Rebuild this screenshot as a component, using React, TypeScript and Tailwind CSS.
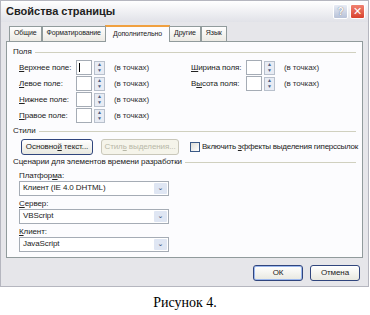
import React from 'react';

const font = "font-['Liberation_Sans','DejaVu_Sans',sans-serif]";

function Spin() {
    return (
        <div className="flex items-center gap-[2px]">
            <div className="h-[15px] w-[16px] border border-[#a5acb5] bg-white" />
            <div className="flex h-[14px] w-[11px] flex-col border border-[#b8c0cc] bg-[#e8ecf4]">
                <div className="flex flex-1 items-center justify-center text-[5px] leading-none text-[#4d6185]">▲</div>
                <div className="flex flex-1 items-center justify-center text-[5px] leading-none text-[#4d6185]">▼</div>
            </div>
        </div>
    );
}

function FieldRow({ label, u, first }: { label: string; u: string; first?: boolean }) {
    const i = label.indexOf(u);
    return (
        <div className="flex h-[16px] items-center">
            <span className="w-[57px]">
                {label.slice(0, i)}
                <span className="underline">{u}</span>
                {label.slice(i + 1)}
            </span>
            <div className="relative">
                <Spin />
                {first && <div className="absolute left-[3px] top-[3px] h-[9px] w-px bg-black" />}
            </div>
            <span className="ml-[9px] text-[#333]">(в точках)</span>
        </div>
    );
}

function Group({ title }: { title: string }) {
    return (
        <div className="flex h-[11px] items-center gap-[3px] pr-[6px]">
            <span>{title}</span>
            <div className="h-px flex-1 bg-[#d0d0bf]" />
        </div>
    );
}

function Select({ value }: { value: string }) {
    return (
        <div className="flex h-[15px] w-[150px] items-center justify-between border border-[#a5acb5] bg-white pl-[3px] pr-[1px]">
            <span>{value}</span>
            <div className="flex h-[11px] w-[13px] items-center justify-center rounded-[1px] bg-[#dfe6f3] text-[7px] font-bold text-[#4d6185]">
                ⌄
            </div>
        </div>
    );
}

export default function App() {
    const tabs = ['Общие', 'Форматирование', 'Дополнительно', 'Другие', 'Язык'];
    return (
        <div className={`h-[315px] w-[370px] whitespace-nowrap bg-white text-[8px] tracking-[-0.1px] text-[#222] ${font}`}>
            <div className="flex h-[287px] w-[369px] flex-col border border-[#b5b6bf] bg-[#e6e6ea] px-[5px] pb-[5px]">
                {/* title bar */}
                <div className="-mx-[5px] flex h-[21px] items-center justify-between bg-gradient-to-b from-[#ffffff] to-[#e1e2e8] pl-[5px] pr-[3px]">
                    <span className="text-[11px] font-bold tracking-normal text-[#222]">Свойства страницы</span>
                    <div className="flex gap-[2px]">
                        <div className="flex h-[15px] w-[15px] items-center justify-center rounded-[2px] border border-[#fff] bg-gradient-to-b from-[#e8ecf5] to-[#b8c2d8] text-[10px] font-bold text-[#fff] [text-shadow:0_0_1px_#445]">
                            ?
                        </div>
                        <div className="flex h-[15px] w-[15px] items-center justify-center rounded-[2px] border border-[#fff] bg-gradient-to-b from-[#f08070] to-[#d8402c] text-[11px] font-bold text-white">
                            ✕
                        </div>
                    </div>
                </div>
                {/* tabs */}
                <div className="mt-[3px] flex items-end pl-[3px] text-[7px] tracking-[-0.1px]">
                    {tabs.map((t) => {
                        const sel = t === 'Дополнительно';
                        return (
                            <div
                                key={t}
                                className={
                                    sel
                                        ? 'relative z-10 -mx-[1px] -mb-px flex h-[17px] items-center border border-b-0 border-[#919b9c] border-t-2 border-t-[#f0a040] bg-[#fcfcfe] px-[7px]'
                                        : 'flex h-[15px] items-center border border-b-0 border-[#919b9c] bg-gradient-to-b from-[#fefefe] to-[#eceae4] px-[4px]'
                                }
                            >
                                {t}
                            </div>
                        );
                    })}
                </div>
                {/* panel */}
                <div className="flex h-[221px] flex-col border border-[#919b9c] bg-[#fcfcfe] pl-[6px] pt-[5px]">
                    <Group title="Поля" />
                    <div className="ml-[6px] mt-[2px] flex">
                        <div className="flex w-[172px] flex-col">
                            <FieldRow label="Верхнее поле:" u="В" first />
                            <FieldRow label="Левое поле:" u="Л" />
                            <FieldRow label="Нижнее поле:" u="Н" />
                            <FieldRow label="Правое поле:" u="П" />
                        </div>
                        <div className="flex flex-col">
                            <div className="flex h-[16px] items-center">
                                <span className="w-[55px]">
                                    <span className="underline">Ш</span>ирина поля:
                                </span>
                                <Spin />
                                <span className="ml-[9px] text-[#333]">(в точках)</span>
                            </div>
                            <div className="flex h-[16px] items-center">
                                <span className="w-[55px]">
                                    В<span className="underline">ы</span>сота поля:
                                </span>
                                <Spin />
                                <span className="ml-[9px] text-[#333]">(в точках)</span>
                            </div>
                        </div>
                    </div>
                    <div className="mt-[2px]">
                        <Group title="Стили" />
                    </div>
                    <div className="ml-[8px] mt-[2px] flex items-center">
                        <div className="flex h-[16px] w-[72px] items-center justify-center rounded-[3px] border border-[#30457d] bg-gradient-to-b from-[#ffffff] to-[#e8e8e0]">
                            Основно<span className="underline">й</span>&nbsp;текст...
                        </div>
                        <div className="ml-[8px] flex h-[16px] w-[78px] items-center justify-center rounded-[3px] border border-[#c9c7ba] bg-[#f5f4ea] text-[#b8b8a8]">
                            Стил<span className="underline">ь</span>&nbsp;выделения...
                        </div>
                        <div className="ml-[11px] h-[10px] w-[10px] border border-[#3b5a86] bg-gradient-to-br from-[#dcdcd6] to-[#ffffff]" />
                        <span className="ml-[2px] tracking-[-0.25px]">
                            Включить <span className="underline">э</span>ффекты выделения гиперссылок
                        </span>
                    </div>
                    <div className="mt-[2px]">
                        <Group title="Сценарии для элементов времени разработки" />
                    </div>
                    <div className="ml-[6px] flex flex-col">
                        <span className="mt-[2px] h-[11px]">
                            Платфор<span className="underline">м</span>а:
                        </span>
                        <Select value="Клиент (IE 4.0 DHTML)" />
                        <span className="mt-[2px] h-[11px]">
                            <span className="underline">С</span>ервер:
                        </span>
                        <Select value="VBScript" />
                        <span className="mt-[2px] h-[11px]">
                            <span className="underline">К</span>лиент:
                        </span>
                        <Select value="JavaScript" />
                    </div>
                </div>
                {/* buttons */}
                <div className="mt-[7px] flex justify-end gap-[7px] pr-[3px]">
                    <div className="flex h-[16px] w-[50px] items-center justify-center rounded-[3px] border border-[#30457d] bg-gradient-to-b from-[#ffffff] to-[#e8e8e0] shadow-[inset_0_0_0_1px_#9cb8ee]">
                        ОК
                    </div>
                    <div className="flex h-[16px] w-[50px] items-center justify-center rounded-[3px] border border-[#30457d] bg-gradient-to-b from-[#ffffff] to-[#e8e8e0]">
                        Отмена
                    </div>
                </div>
            </div>
            <div className="mt-[5px] text-center font-['Liberation_Serif',serif] text-[14px] font-normal tracking-normal text-black">
                Рисунок 4.
            </div>
        </div>
    );
}
